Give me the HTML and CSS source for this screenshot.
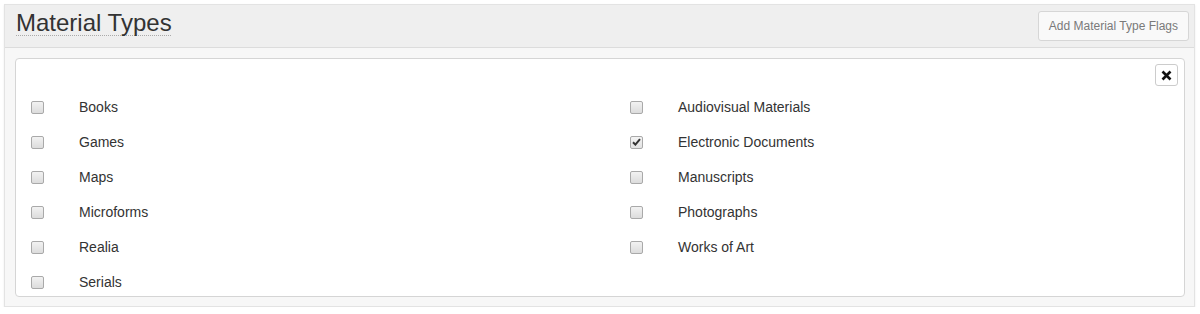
FILE: index.html
```html
<!DOCTYPE html>
<html>
<head>
<meta charset="utf-8">
<link rel="stylesheet" href="styles.css">
</head>
<body>
<div class="panel">
  <div class="panel-heading">
    <h2 class="title"><span class="title-text">Material Types</span></h2>
    <button class="btn-flags">Add Material Type Flags</button>
  </div>
  <div class="panel-body">
    <div class="box">
      <div class="box-top">
        <button class="btn-close" aria-label="Close">
          <svg width="11" height="11" viewBox="0 0 11 11"><path d="M1.5 1.5 L9.5 9.5 M9.5 1.5 L1.5 9.5" stroke="#111" stroke-width="2.6" stroke-linecap="butt"/></svg>
        </button>
      </div>
      <div class="grid">
        <label class="item"><span class="cb"></span><span class="lbl">Books</span></label>
        <label class="item"><span class="cb"></span><span class="lbl">Audiovisual Materials</span></label>
        <label class="item"><span class="cb"></span><span class="lbl">Games</span></label>
        <label class="item"><span class="cb checked"><svg width="9" height="8" viewBox="0 0 9 8"><path d="M1 4.2 L3.4 6.6 L8 1.2" fill="none" stroke="#333" stroke-width="2"/></svg></span><span class="lbl">Electronic Documents</span></label>
        <label class="item"><span class="cb"></span><span class="lbl">Maps</span></label>
        <label class="item"><span class="cb"></span><span class="lbl">Manuscripts</span></label>
        <label class="item"><span class="cb"></span><span class="lbl">Microforms</span></label>
        <label class="item"><span class="cb"></span><span class="lbl">Photographs</span></label>
        <label class="item"><span class="cb"></span><span class="lbl">Realia</span></label>
        <label class="item"><span class="cb"></span><span class="lbl">Works of Art</span></label>
        <label class="item"><span class="cb"></span><span class="lbl">Serials</span></label>
      </div>
    </div>
  </div>
</div>
</body>
</html>
```
FILE: styles.css
```css
html, body {
  margin: 0;
  padding: 0;
  background: #fff;
}
body {
  font-family: "Liberation Sans", Arial, sans-serif;
  color: #333;
}
.panel {
  margin: 4px 5px 0 4px;
  border: 1px solid #e3e3e3;
  background: #f7f7f7;
  box-shadow: 0 1px 2px rgba(0,0,0,0.08);
}
.panel-heading {
  height: 42px;
  background: #efefef;
  border-bottom: 1px solid #dcdcdc;
  display: flex;
  align-items: flex-start;
  justify-content: space-between;
  padding: 0 5px 0 11px;
}
.title {
  margin: 0;
  padding-top: 4px;
  font-size: 24px;
  font-weight: normal;
  line-height: 28px;
  color: #333;
}
.title-text {
  text-decoration-line: underline;
  text-decoration-style: dotted;
  text-decoration-color: #aaa;
  text-decoration-thickness: 1px;
  text-underline-offset: 4px;
  text-decoration-skip-ink: none;
}
.btn-flags {
  margin-top: 6px;
  height: 30px;
  padding: 0 10px;
  font-family: "Liberation Sans", Arial, sans-serif;
  font-size: 12px;
  color: #7a7a7a;
  background: #f9f9f9;
  border: 1px solid #d6d6d6;
  border-radius: 3px;
}
.panel-body {
  padding: 10px 9px 9px 10px;
}
.box {
  background: #fff;
  border: 1px solid #d5d5d5;
  border-radius: 4px;
  padding: 5px 6px 4px 0;
}
.box-top {
  display: flex;
  justify-content: flex-end;
  height: 22px;
}
.btn-close {
  width: 23px;
  height: 22px;
  padding: 0;
  display: flex;
  align-items: center;
  justify-content: center;
  background: #fff;
  border: 1px solid #ccc;
  border-radius: 3px;
}
.grid {
  margin-top: 11px;
  display: grid;
  grid-template-columns: 599px 1fr;
  row-gap: 15px;
}
.item {
  display: flex;
  align-items: center;
  height: 20px;
  padding-left: 15px;
  font-size: 14px;
}
.cb {
  box-sizing: border-box;
  width: 13px;
  height: 13px;
  border: 1px solid #a9a9a9;
  border-radius: 2px;
  background: linear-gradient(#f2f2f2, #dcdcdc);
  display: flex;
  align-items: center;
  justify-content: center;
  flex: none;
}
.cb.checked {
  background: linear-gradient(#f4f4f4, #e2e2e2);
}
.lbl {
  margin-left: 35px;
  color: #333;
}
```
